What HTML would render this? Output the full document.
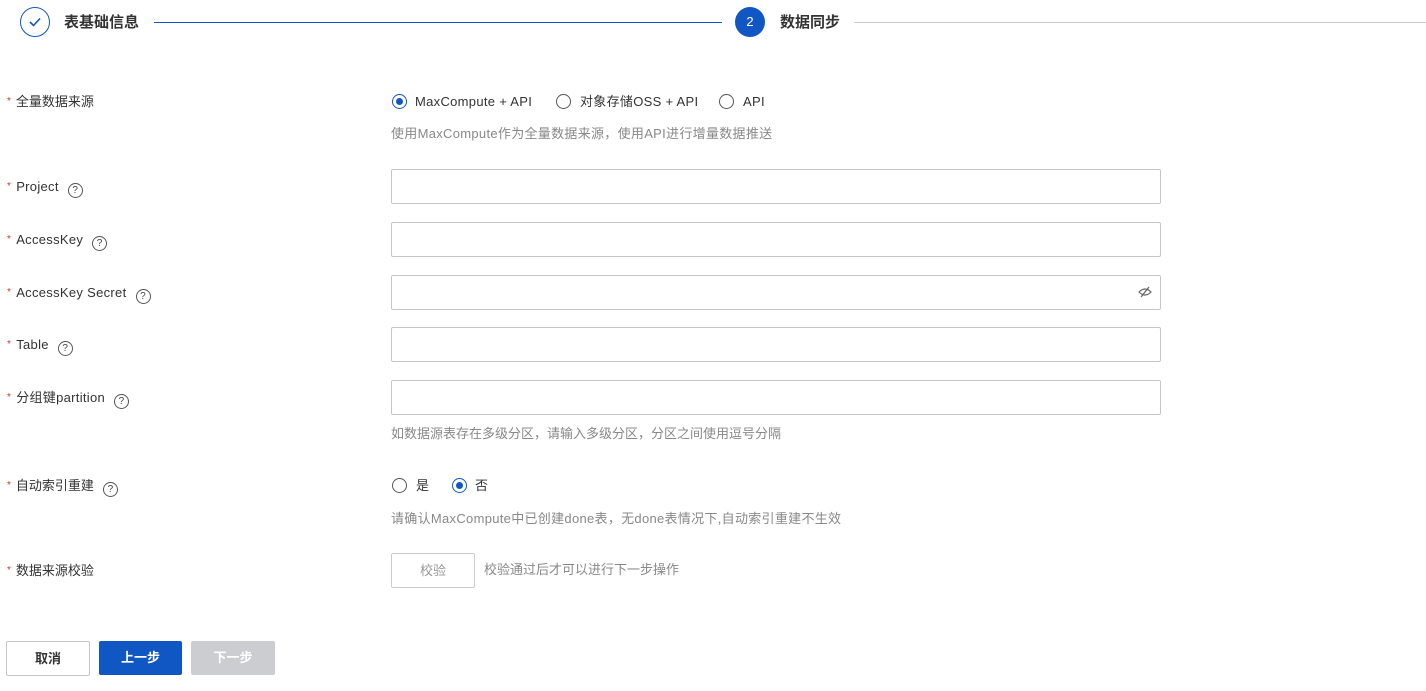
<!DOCTYPE html>
<html><head><meta charset="utf-8"><style>
body{margin:0;width:1426px;height:691px;background:#fff;position:relative;overflow:hidden;font-family:"Liberation Sans","Noto Sans CJK SC",sans-serif;font-size:13px;color:#333}
.a{position:absolute;white-space:nowrap;line-height:16px}
.lbl{position:absolute;left:7px;font-size:13px;color:#333;line-height:16px;white-space:nowrap}
.lbl b{color:#d93026;font-weight:normal;font-size:10px;margin-right:5px;position:relative;top:-2px}
.q{display:inline-block;width:13px;height:13px;border:1.2px solid #555;border-radius:50%;font-size:10px;line-height:13px;text-align:center;margin-left:9px;vertical-align:-2px;color:#444}
.inp{position:absolute;left:391px;width:768px;height:33px;border:1px solid #c4c6cc;border-radius:2px}
.help{position:absolute;left:391px;color:#888;font-size:13px;line-height:16px;white-space:nowrap}
.r{position:absolute;width:13px;height:13px;border:1px solid #555;border-radius:50%}
.r.on{border-color:#1157c3}
.r.on:after{content:"";position:absolute;left:3px;top:3px;width:7px;height:7px;border-radius:50%;background:#1157c3}
.btn{position:absolute;top:641px;height:34px;width:82px;border-radius:2px;text-align:center;line-height:34px;font-size:13px;font-weight:bold}
.lat{letter-spacing:0.3px}
</style></head><body>
<div class="a" style="left:20px;top:7px;width:28px;height:28px;border:1.3px solid #1157c3;border-radius:50%"></div>
<svg class="a" style="left:27px;top:15px" width="16" height="14"><path d="M3 7 L6.5 10.5 L13 3.5" stroke="#1157c3" stroke-width="1.6" fill="none"/></svg>
<div class="a" style="left:64px;top:15px;font-size:15px;font-weight:bold;color:#333">表基础信息</div>
<div class="a" style="left:154px;top:22px;width:568px;height:1px;background:#1157c3"></div>
<div class="a" style="left:735px;top:7px;width:30px;height:30px;border-radius:50%;background:#1157c3;color:#fff;text-align:center;line-height:30px;font-size:13px">2</div>
<div class="a" style="left:780px;top:15px;font-size:15px;font-weight:bold;color:#333">数据同步</div>
<div class="a" style="left:854px;top:22px;width:572px;height:1px;background:#ccc"></div>

<div class="lbl" style="top:94px"><b>*</b>全量数据来源</div>
<div class="r on" style="left:392px;top:94px"></div><div class="a lat" style="left:415px;top:94px">MaxCompute + API</div>
<div class="r" style="left:556px;top:94px"></div><div class="a lat" style="left:580px;top:94px">对象存储OSS + API</div>
<div class="r" style="left:719px;top:94px"></div><div class="a lat" style="left:743px;top:94px">API</div>
<div class="help lat" style="top:126px">使用MaxCompute作为全量数据来源，使用API进行增量数据推送</div>

<div class="lbl lat" style="top:179px"><b>*</b>Project<span class="q">?</span></div>
<div class="inp" style="top:169px"></div>
<div class="lbl lat" style="top:232px"><b>*</b>AccessKey<span class="q">?</span></div>
<div class="inp" style="top:222px"></div>
<div class="lbl lat" style="top:285px"><b>*</b>AccessKey Secret<span class="q">?</span></div>
<div class="inp" style="top:275px"></div>
<svg class="a" style="left:1137px;top:285px" width="16" height="14"><path d="M2 7 Q8 1 14 7 Q8 13 2 7Z" stroke="#666" stroke-width="1.2" fill="none"/><path d="M4 12 L12 2" stroke="#666" stroke-width="1.2"/></svg>
<div class="lbl lat" style="top:337px"><b>*</b>Table<span class="q">?</span></div>
<div class="inp" style="top:327px"></div>
<div class="lbl lat" style="top:390px"><b>*</b>分组键partition<span class="q">?</span></div>
<div class="inp" style="top:380px"></div>
<div class="help" style="top:426px">如数据源表存在多级分区，请输入多级分区，分区之间使用逗号分隔</div>

<div class="lbl" style="top:478px"><b>*</b>自动索引重建<span class="q">?</span></div>
<div class="r" style="left:392px;top:478px"></div><div class="a" style="left:416px;top:478px">是</div>
<div class="r on" style="left:452px;top:478px"></div><div class="a" style="left:475px;top:478px">否</div>
<div class="help lat" style="top:511px">请确认MaxCompute中已创建done表，无done表情况下,自动索引重建不生效</div>

<div class="lbl" style="top:563px"><b>*</b>数据来源校验</div>
<div class="a" style="left:391px;top:553px;width:82px;height:33px;border:1px solid #ccc;border-radius:2px;text-align:center;line-height:33px;color:#999">校验</div>
<div class="a" style="left:484px;top:562px;color:#888">校验通过后才可以进行下一步操作</div>

<div class="btn" style="left:6px;border:1px solid #c4c6cc;width:82px;height:33px;line-height:33px;color:#333">取消</div>
<div class="btn" style="left:99px;width:83px;background:#1157c3;color:#fff">上一步</div>
<div class="btn" style="left:191px;width:84px;background:#cbcdd1;color:#fff">下一步</div>
</body></html>
